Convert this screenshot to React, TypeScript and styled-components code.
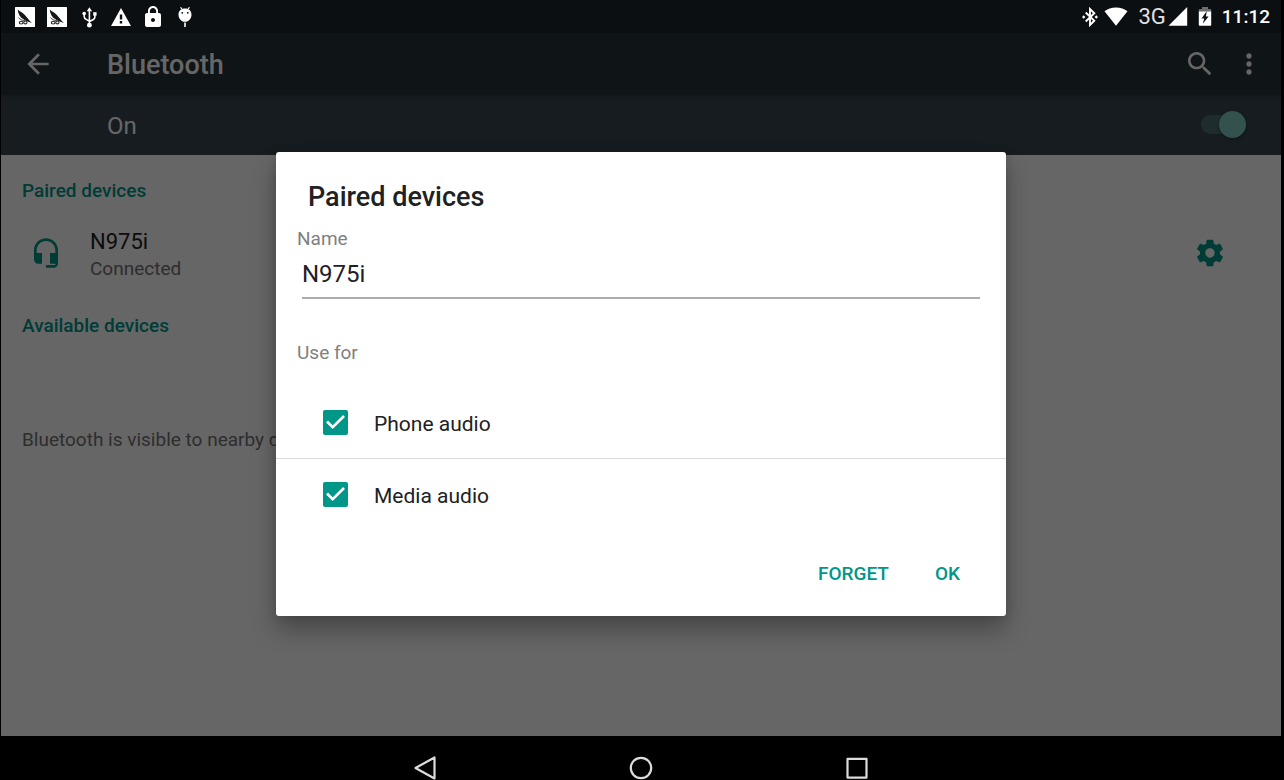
import React, { useState } from "react";
import styled, { createGlobalStyle } from "styled-components";

const teal = "#009688";

const GlobalStyle = createGlobalStyle`
  * { box-sizing: border-box; }
  body {
    margin: 0;
    background: #000;
    font-family: Roboto, "Noto Sans", sans-serif;
    color: #212121;
  }
  button, input { font: inherit; color: inherit; }
  h1, h2, p { margin: 0; }
  svg { display: block; }
`;

const Device = styled.div`
  display: flex;
  flex-direction: column;
  min-height: 100vh;
  padding: 0 3px 0 1px;
  background: #000;
`;

const StatusBar = styled.header`
  display: flex;
  justify-content: space-between;
  align-items: center;
  height: 33px;
  padding: 0 11px 0 12px;
  background: #0b0f11;
  color: #fff;
`;

const StatusGroup = styled.div<{ $gap: number }>`
  display: flex;
  align-items: center;
  gap: ${(p) => p.$gap}px;
`;

const Network = styled.span`
  display: flex;
  align-items: center;
  gap: 2px;
  font-family: "Liberation Sans Narrow", Roboto, sans-serif;
  font-size: 22px;
  line-height: 24px;
  color: #e0e0e0;
`;

const Clock = styled.time`
  font-size: 19px;
  line-height: 24px;
  font-weight: 500;
`;

const Screen = styled.div`
  position: relative;
  flex: 1;
  display: flex;
  flex-direction: column;
  background: #fff;
`;

const AppBar = styled.div`
  z-index: 1;
  display: flex;
  align-items: center;
  gap: 17px;
  height: 61px;
  padding: 0 16px 0 21px;
  background: #263238;
  color: #fff;
  box-shadow: 0 2px 4px rgba(0, 0, 0, 0.3);
`;

const AppTitle = styled.h1`
  flex: 1;
  padding: 2px 0 0 36px;
  font-size: 27px;
  line-height: 32px;
  font-weight: 500;
`;

const IconButton = styled.button`
  padding: 0;
  border: 0;
  background: none;
  cursor: pointer;
`;

const SwitchBar = styled.label`
  display: flex;
  align-items: center;
  justify-content: space-between;
  height: 61px;
  padding: 0 35px 0 106px;
  background: #37474f;
  color: #fff;
  font-size: 24px;
  line-height: 32px;
`;

const SwitchText = styled.span`
  padding-top: 2px;
`;

const Switch = styled.input`
  appearance: none;
  position: relative;
  width: 45px;
  height: 27px;
  margin: 0;
  &::before {
    content: "";
    position: absolute;
    inset: 4px 4px 4px 0;
    border-radius: 10px;
    background: rgba(128, 203, 196, 0.3);
  }
  &::after {
    content: "";
    position: absolute;
    top: 0;
    left: 0;
    width: 27px;
    height: 27px;
    border-radius: 50%;
    background: #b9b9b9;
    box-shadow: 0 1px 3px rgba(0, 0, 0, 0.4);
  }
  &:checked::after {
    left: 18px;
    background: #80cbc4;
  }
`;

const Content = styled.main`
  flex: 1;
  display: flex;
  flex-direction: column;
  gap: 11px;
  padding: 9px 21px;
`;

const SectionTitle = styled.h2`
  font-size: 19px;
  line-height: 54px;
  font-weight: 500;
  color: ${teal};
`;

const DeviceRow = styled.div`
  display: flex;
  align-items: center;
  height: 70px;
  padding: 0 34px 0 8px;
  color: ${teal};
`;

const DeviceText = styled.div`
  flex: 1;
  padding: 4px 0 0 28px;
`;

const DeviceName = styled.p`
  font-size: 22px;
  line-height: 27px;
  color: #212121;
`;

const Secondary = styled.p`
  font-size: 19px;
  line-height: 27px;
  color: #737373;
`;

const Visibility = styled(Secondary)`
  padding-top: 62px;
  white-space: nowrap;
  overflow: hidden;
`;

const Scrim = styled.div`
  position: absolute;
  inset: 0;
  z-index: 2;
  display: flex;
  align-items: center;
  justify-content: center;
  padding-bottom: 1px;
  background: rgba(0, 0, 0, 0.6);
`;

const Dialog = styled.form`
  width: 90%;
  max-width: 730px;
  padding-top: 29px;
  border-radius: 3px;
  background: #fff;
  box-shadow: 0 14px 24px rgba(0, 0, 0, 0.3), 0 0 8px rgba(0, 0, 0, 0.12);
`;

const DialogTitle = styled.h2`
  padding: 0 32px 14px;
  font-size: 27px;
  line-height: 32px;
  font-weight: 500;
`;

const FieldLabel = styled.label`
  display: block;
  padding: 0 21px;
  font-size: 19px;
  line-height: 24px;
  color: #808080;
`;

const FieldBox = styled.div`
  padding: 0 26px 42px;
`;

const NameInput = styled.input`
  display: block;
  width: 100%;
  height: 48px;
  padding: 0;
  border: 0;
  border-bottom: 2px solid #adadad;
  border-radius: 0;
  background: none;
  outline: 0;
  font-size: 24px;
`;

const Profiles = styled.fieldset`
  margin: 0;
  padding: 0;
  border: 0;
`;

const ProfilesTitle = styled.legend`
  padding: 0 21px 22px;
  font-size: 19px;
  line-height: 24px;
  color: #808080;
`;

const ProfileRow = styled.label`
  display: flex;
  align-items: center;
  gap: 26px;
  height: 72px;
  padding-left: 47px;
  border-bottom: 1px solid #dadada;
  font-size: 21px;
  line-height: 24px;
  &:last-child {
    border-bottom-color: transparent;
  }
`;

const ProfileName = styled.span`
  padding-top: 3px;
`;

const CheckWrap = styled.span`
  display: grid;
  width: 25px;
  height: 25px;
  & > * {
    grid-area: 1 / 1;
  }
`;

const CheckInput = styled.input`
  appearance: none;
  width: 25px;
  height: 25px;
  margin: 0;
  border: 2px solid #737373;
  border-radius: 2px;
  &:checked {
    border: 0;
    background: ${teal};
  }
  &:not(:checked) + svg {
    visibility: hidden;
  }
`;

const Actions = styled.div`
  display: flex;
  justify-content: flex-end;
  align-items: center;
  gap: 22px;
  height: 85px;
  padding: 0 34px;
`;

const TextButton = styled.button`
  height: 44px;
  padding: 0 12px;
  border: 0;
  background: none;
  color: ${teal};
  font-size: 19px;
  font-weight: 500;
  cursor: pointer;
`;

const NavBar = styled.nav`
  display: flex;
  justify-content: center;
  gap: 192px;
  padding-top: 20px;
  color: #dcdcdc;
`;

const Icon = ({ d, size = 32 }: { d: string; size?: number }) => (
  <svg width={size} height={size} viewBox="0 0 24 24" fill="currentColor" aria-hidden="true">
    <path d={d} fillRule="evenodd" />
  </svg>
);

const paths = {
  back: "M20 11H7.83l5.59-5.59L12 4l-8 8 8 8 1.41-1.41L7.83 13H20v-2z",
  search:
    "M15.5 14h-.79l-.28-.27C15.41 12.59 16 11.11 16 9.5 16 5.91 13.09 3 9.5 3S3 5.91 3 9.5 5.91 16 9.5 16c1.61 0 3.09-.59 4.23-1.57l.27.28v.79l5 4.99L20.49 19l-4.99-5zm-6 0C7.01 14 5 11.99 5 9.5S7.01 5 9.5 5 14 7.01 14 9.5 11.99 14 9.5 14z",
  more: "M12 8c1.1 0 2-.9 2-2s-.9-2-2-2-2 .9-2 2 .9 2 2 2zm0 2c-1.1 0-2 .9-2 2s.9 2 2 2 2-.9 2-2-.9-2-2-2zm0 6c-1.1 0-2 .9-2 2s.9 2 2 2 2-.9 2-2-.9-2-2-2z",
  headset:
    "M12 1c-4.97 0-9 4.03-9 9v7c0 1.66 1.34 3 3 3h3v-8H5v-2c0-3.87 3.13-7 7-7s7 3.13 7 7v2h-4v8h4v1h-7v2h6c1.66 0 3-1.34 3-3V10c0-4.97-4.03-9-9-9z",
  gear: "M19.43 12.98c.04-.32.07-.64.07-.98s-.03-.66-.07-.98l2.11-1.65c.19-.15.24-.42.12-.64l-2-3.46c-.12-.22-.39-.3-.61-.22l-2.49 1c-.52-.4-1.08-.73-1.69-.98l-.38-2.65C14.46 2.18 14.25 2 14 2h-4c-.25 0-.46.18-.49.42l-.38 2.65c-.61.25-1.17.59-1.69.98l-2.49-1c-.23-.09-.49 0-.61.22l-2 3.46c-.13.22-.07.49.12.64l2.11 1.65c-.04.32-.07.65-.07.98s.03.66.07.98l-2.11 1.65c-.19.15-.24.42-.12.64l2 3.46c.12.22.39.3.61.22l2.49-1c.52.4 1.08.73 1.69.98l.38 2.65c.03.24.24.42.49.42h4c.25 0 .46-.18.49-.42l.38-2.65c.61-.25 1.17-.59 1.69-.98l2.49 1c.23.09.49 0 .61-.22l2-3.46c.12-.22.07-.49-.12-.64l-2.11-1.65zM12 15.5c-1.93 0-3.5-1.57-3.5-3.5s1.57-3.5 3.5-3.5 3.5 1.57 3.5 3.5-1.57 3.5-3.5 3.5z",
  warning: "M2 21h20L12 3 2 21zm11.2-2.6h-2.4V16h2.4v2.4zm0-3.8h-2.4V9.4h2.4v5.2z",
  lock: "M18 8h-1V6c0-2.76-2.24-5-5-5S7 3.24 7 6v2H6c-1.1 0-2 .9-2 2v10c0 1.1.9 2 2 2h12c1.1 0 2-.9 2-2V10c0-1.1-.9-2-2-2zm-6 9c-1.1 0-2-.9-2-2s.9-2 2-2 2 .9 2 2-.9 2-2 2zm3.1-9H8.9V6c0-1.71 1.39-3.1 3.1-3.1 1.71 0 3.1 1.39 3.1 3.1v2z",
};

const FeatherIcon = () => (
  <svg width="24" height="24" viewBox="0 0 24 24" aria-hidden="true">
    <rect x="2" y="2" width="20" height="20" rx="0.5" fill="#fff" />
    <path d="M4.8 4.6C7 6.800 9.500 7.400 11.600 9.800C14 12.400 16 15.400 18.800 18L14.800 16.600C11.500 15 9.800 14 8 12.400C6 10.400 5 7.800 4.800 4.600Z" fill="#161616" />
    <path d="M5.400 12.600C7 14.400 9.500 15.200 12 16.200" stroke="#333" strokeWidth="0.900" fill="none" />
    <ellipse cx="8.200" cy="17.600" rx="1.900" ry="1.400" fill="none" stroke="#222" strokeWidth="1.100" />
    <ellipse cx="12.400" cy="17.400" rx="1.600" ry="1.500" fill="none" stroke="#222" strokeWidth="1.100" />
  </svg>
);

const UsbIcon = () => (
  <svg width="24" height="24" viewBox="0 0 24 24" fill="#fff" aria-hidden="true">
    <path
      d="M12.400 5v16M7.200 9v2.600c0 1.400.8 2.200 2 2.800l3.200 1.800M17.900 10v2c0 1.400-.7 2.100-1.900 2.700l-3.600 1.800"
      fill="none"
      stroke="#fff"
      strokeWidth="1.600"
    />
    <path d="M12.400 2.200l2.700 4H9.700z" />
    <circle cx="7.200" cy="8.600" r="1.800" />
    <path d="M16.200 7.200h3.400v3.400h-3.400z" />
    <circle cx="12.400" cy="20.200" r="2.400" />
  </svg>
);

const DroidIcon = () => (
  <svg width="24" height="24" viewBox="0 0 24 24" aria-hidden="true">
    <path d="M7.800 2.600l1.900 2.400M16.200 2.600l-1.900 2.400" stroke="#fff" strokeWidth="1.200" strokeLinecap="round" />
    <path d="M12 3.500c3.800 0 6.500 2.300 6.500 6 0 3.800-2.500 7.300-6.500 7.300s-6.500-3.500-6.500-7.300c0-3.700 2.700-6 6.500-6z" fill="#fff" />
    <circle cx="9.200" cy="7.800" r="0.900" fill="#0b0f11" />
    <circle cx="14.800" cy="7.800" r="0.900" fill="#0b0f11" />
    <path d="M12 17.500v4.500" stroke="#fff" strokeWidth="1.600" />
  </svg>
);

const BluetoothIcon = () => (
  <svg width="16" height="20" viewBox="0 0 16 20" fill="none" aria-hidden="true">
    <path d="M3.700 5.500l8.600 8.300L8 18V2l4.300 4.200-8.600 8.300" stroke="#fff" strokeWidth="1.900" />
    <path d="M0 10l1.700-1.700L3.400 10l-1.700 1.700zM12.600 10l1.700-1.700L16 10l-1.700 1.700z" fill="#fff" />
  </svg>
);

const WifiIcon = () => (
  <svg width="24" height="20" viewBox="0 0 24 20" aria-hidden="true">
    <path d="M12 18.800L.5 4.300C3.500 2 7.500.5 12 .5s8.500 1.500 11.500 3.800z" fill="#fff" />
  </svg>
);

const SignalIcon = () => (
  <svg width="20" height="20" viewBox="0 0 20 20" aria-hidden="true">
    <path d="M.5 18.700L19.200 0v18.700z" fill="#fff" />
  </svg>
);

const BatteryIcon = () => (
  <svg width="14" height="20" viewBox="0 0 14 20" aria-hidden="true">
    <path d="M4 0h6v2h2.200c.6 0 1 .4 1 1v2H.8V3c0-.6.4-1 1-1H4z" fill="#6b6d6e" />
    <path d="M.8 4.500h12.400v13.200c0 .6-.4 1-1 1H1.800c-.6 0-1-.4-1-1z" fill="#fff" />
    <path d="M8.800 4L3.600 11.400h2.700l-1.500 5.300 5.800-7.200H7.900z" fill="#0b0f11" />
  </svg>
);

const Tick = () => (
  <svg width="25" height="25" viewBox="0 0 25 25" fill="none" aria-hidden="true">
    <path d="M4 11.500l5.700 5.600L21 6" stroke="#fff" strokeWidth="2.700" />
  </svg>
);

export default function App() {
  const [name, setName] = useState("N975i");

  return (
    <>
      <GlobalStyle />
      <Device>
        <StatusBar>
          <StatusGroup $gap={8}>
            <FeatherIcon />
            <FeatherIcon />
            <UsbIcon />
            <Icon d={paths.warning} size={24} />
            <Icon d={paths.lock} size={24} />
            <DroidIcon />
          </StatusGroup>
          <StatusGroup $gap={10}>
            <StatusGroup $gap={6}>
              <BluetoothIcon />
              <WifiIcon />
            </StatusGroup>
            <Network>
              3G
              <SignalIcon />
            </Network>
            <BatteryIcon />
            <Clock>11:12</Clock>
          </StatusGroup>
        </StatusBar>

        <Screen>
          <AppBar>
            <IconButton type="button" aria-label="Back">
              <Icon d={paths.back} />
            </IconButton>
            <AppTitle>Bluetooth</AppTitle>
            <IconButton type="button" aria-label="Search">
              <Icon d={paths.search} />
            </IconButton>
            <IconButton type="button" aria-label="More options">
              <Icon d={paths.more} />
            </IconButton>
          </AppBar>
          <SwitchBar>
            <SwitchText>On</SwitchText>
            <Switch type="checkbox" role="switch" defaultChecked />
          </SwitchBar>

          <Content>
            <section>
              <SectionTitle>Paired devices</SectionTitle>
              <DeviceRow>
                <Icon d={paths.headset} />
                <DeviceText>
                  <DeviceName>N975i</DeviceName>
                  <Secondary>Connected</Secondary>
                </DeviceText>
                <IconButton type="button" aria-label="Device settings">
                  <Icon d={paths.gear} />
                </IconButton>
              </DeviceRow>
            </section>
            <section>
              <SectionTitle>Available devices</SectionTitle>
            </section>
            <Visibility>Bluetooth is visible to nearby devices</Visibility>
          </Content>

          <Scrim>
            <Dialog
              role="dialog"
              aria-labelledby="dialog-title"
              onSubmit={(e: React.FormEvent) => e.preventDefault()}
            >
              <DialogTitle id="dialog-title">Paired devices</DialogTitle>
              <FieldLabel htmlFor="device-name">Name</FieldLabel>
              <FieldBox>
                <NameInput
                  id="device-name"
                  type="text"
                  spellCheck={false}
                  value={name}
                  onChange={(e) => setName(e.target.value)}
                />
              </FieldBox>
              <Profiles>
                <ProfilesTitle>Use for</ProfilesTitle>
                {["Phone audio", "Media audio"].map((profile) => (
                  <ProfileRow key={profile}>
                    <CheckWrap>
                      <CheckInput type="checkbox" defaultChecked />
                      <Tick />
                    </CheckWrap>
                    <ProfileName>{profile}</ProfileName>
                  </ProfileRow>
                ))}
              </Profiles>
              <Actions>
                <TextButton type="button">FORGET</TextButton>
                <TextButton type="submit">OK</TextButton>
              </Actions>
            </Dialog>
          </Scrim>
        </Screen>

        <NavBar>
          <IconButton type="button" aria-label="Back">
            <svg width="24" height="24" viewBox="0 0 24 24" fill="none" stroke="currentColor" strokeWidth="2.200" strokeLinejoin="round">
              <path d="M21.500 1.500v21L2.500 12z" />
            </svg>
          </IconButton>
          <IconButton type="button" aria-label="Home">
            <svg width="24" height="24" viewBox="0 0 24 24" fill="none" stroke="currentColor" strokeWidth="2.200">
              <circle cx="12" cy="12" r="10.200" />
            </svg>
          </IconButton>
          <IconButton type="button" aria-label="Recent apps">
            <svg width="24" height="24" viewBox="0 0 24 24" fill="none" stroke="currentColor" strokeWidth="2.200" strokeLinejoin="round">
              <rect x="2.500" y="2.800" width="19" height="18.800" />
            </svg>
          </IconButton>
        </NavBar>
      </Device>
    </>
  );
}
